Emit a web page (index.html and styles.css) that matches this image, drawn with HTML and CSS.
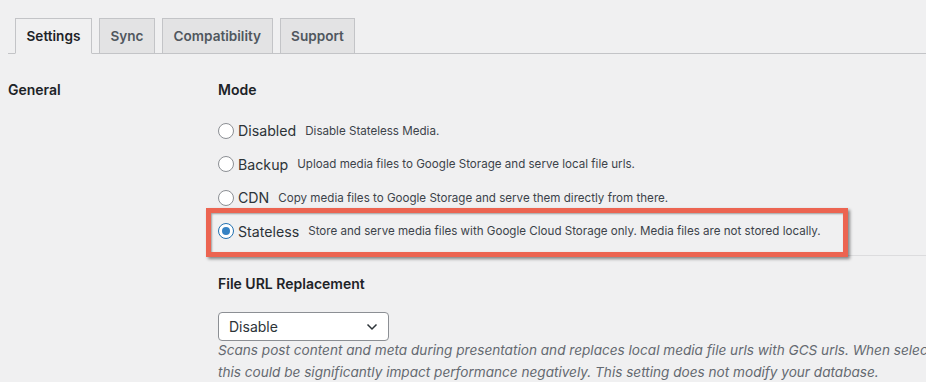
FILE: index.html
```html
<!DOCTYPE html>
<html lang="en">
<head>
    <meta charset="UTF-8">
    <meta name="viewport" content="width=device-width, initial-scale=1.0">
    <title>Stateless Media Settings</title>
    <link rel="stylesheet" href="styles.css">
</head>
<body>

    <div class="wrap">
        <!-- Tabs -->
        <nav class="nav-tabs">
            <a class="nav-tab active" href="#">Settings</a>
            <a class="nav-tab" href="#">Sync</a>
            <a class="nav-tab" href="#">Compatibility</a>
            <a class="nav-tab" href="#">Support</a>
        </nav>

        <div class="form-row">
            <div class="row-title">General</div>

            <div class="row-body">
                <h3 class="field-title">Mode</h3>

                <div class="mode-list">
                    <label class="mode-option">
                        <span class="radio"></span>
                        <span class="mode-name">Disabled</span>
                        <span class="mode-desc">Disable Stateless Media.</span>
                    </label>
                    <label class="mode-option">
                        <span class="radio"></span>
                        <span class="mode-name">Backup</span>
                        <span class="mode-desc">Upload media files to Google Storage and serve local file urls.</span>
                    </label>
                    <label class="mode-option">
                        <span class="radio"></span>
                        <span class="mode-name">CDN</span>
                        <span class="mode-desc">Copy media files to Google Storage and serve them directly from there.</span>
                    </label>
                    <label class="mode-option highlighted">
                        <span class="radio checked"></span>
                        <span class="mode-name">Stateless</span>
                        <span class="mode-desc">Store and serve media files with Google Cloud Storage only. Media files are not stored locally.</span>
                        <span class="highlight-box"></span>
                    </label>
                </div>

                <h3 class="field-title spaced">File URL Replacement</h3>

                <div class="select">
                    <span>Disable</span>
                    <svg width="12" height="8" viewBox="0 0 12 8">
                        <polyline points="1.5,1.5 6,6 10.5,1.5" fill="none" stroke="#2c3338" stroke-width="1.5"/>
                    </svg>
                </div>

                <p class="description">
                    Scans post content and meta during presentation and replaces local media file urls with GCS urls. When selected,<br>
                    this could be significantly impact performance negatively. This setting does not modify your database.
                </p>
            </div>
        </div>
    </div>

</body>
</html>
```

FILE: styles.css
```css
:root {
    --page-bg: #f0f0f1;
    --text: #1d2327;
    --text-soft: #3c434a;
    --border: #c3c4c7;
    --muted: #646970;
    --blue: #2271b1;
    --red: #ec6451;
}

* {
    box-sizing: border-box;
    margin: 0;
    padding: 0;
}

html, body {
    overflow: hidden;
}

body {
    font-family: 'Inter', 'Liberation Sans', sans-serif;
    font-size: 14px;
    color: var(--text);
    background-color: var(--page-bg);
    width: 926px;
    height: 382px;
}

.wrap {
    padding-left: 8px;
}

/* Tabs */
.nav-tabs {
    display: flex;
    gap: 7px;
    padding: 18px 0 0 7px;
    border-bottom: 1px solid var(--border);
}

.nav-tab {
    display: block;
    padding: 5px 10.5px;
    margin-bottom: -1px;
    font-size: 13.6px;
    font-weight: 600;
    line-height: 24px;
    color: #50575e;
    text-decoration: none;
    background-color: #e3e3e4;
    border: 1px solid var(--border);
}

.nav-tab.active {
    color: var(--text);
    background-color: var(--page-bg);
    border-bottom-color: var(--page-bg);
}

/* Form row */
.form-row {
    display: flex;
    margin-top: 26px;
}

.row-title {
    width: 210px;
    flex-shrink: 0;
    font-weight: 600;
    line-height: 20px;
}

.row-body {
    flex: 1;
}

.field-title {
    font-size: 14px;
    font-weight: 600;
    line-height: 20px;
}

.field-title.spaced {
    margin-top: 18px;
}

/* Mode radios */
.mode-list {
    margin-top: 14px;
    padding-bottom: 7px;
    border-bottom: 1px solid #dcdcde;
}

.mode-option {
    position: relative;
    display: flex;
    align-items: center;
    height: 33.5px;
    white-space: nowrap;
}

.radio {
    width: 16px;
    height: 16px;
    border: 1px solid #8c8f94;
    border-radius: 50%;
    background: white;
    display: flex;
    align-items: center;
    justify-content: center;
}

.radio.checked {
    border-color: var(--blue);
}

.radio.checked::after {
    content: "";
    width: 8px;
    height: 8px;
    border-radius: 50%;
    background: #3582c4;
}

.mode-name {
    margin-left: 4px;
    font-size: 14.2px;
    color: #2c3338;
}

.mode-desc {
    margin-left: 9px;
    font-size: 11.6px;
    color: var(--text-soft);
}

/* annotation box around the selected option */
.highlight-box {
    position: absolute;
    left: -12px;
    top: -7px;
    width: 642px;
    height: 49px;
    border: 5px solid var(--red);
    box-shadow: 2px 2px 3px rgba(0, 0, 0, 0.45), inset 1px 1px 2px rgba(0, 0, 0, 0.35);
}

/* Select */
.select {
    display: flex;
    align-items: center;
    justify-content: space-between;
    width: 171px;
    height: 29px;
    margin-top: 18px;
    padding: 0 10px;
    background: white;
    border: 1px solid #8c8f94;
    border-radius: 4px;
    color: #2c3338;
}

.description {
    margin-top: -2px;
    font-size: 13.6px;
    font-style: italic;
    line-height: 22px;
    color: var(--muted);
    white-space: nowrap;
}
```
